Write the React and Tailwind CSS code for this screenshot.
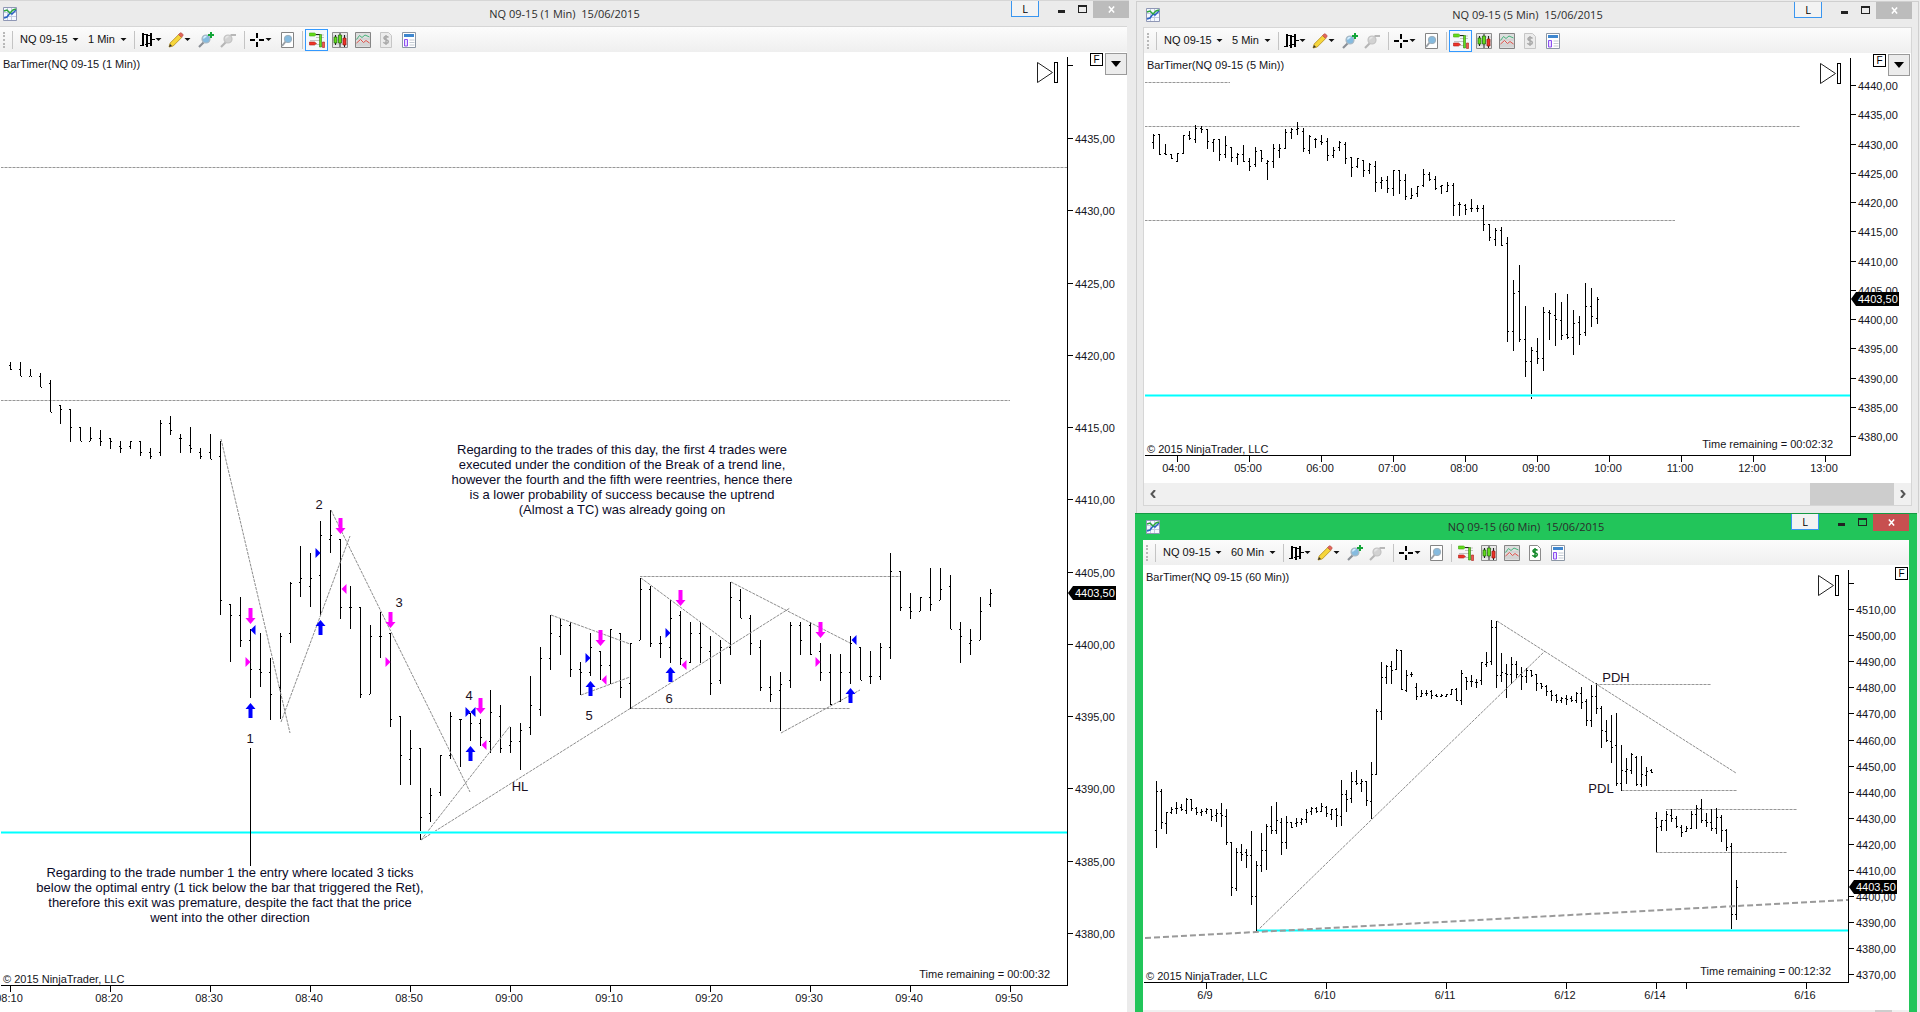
import { useState } from 'react';

// every row is [high, low, open, close] as y positions on the canvas
const bars1 = [
  [362, 370, 365, 369], [362, 376, 369, 376], [369, 376, 376, 376], [373, 387, 376, 387], [380, 412, 383, 412],
  [405, 424, 405, 409], [409, 442, 409, 427], [427, 441, 427, 441], [427, 441, 441, 438], [430, 446, 438, 441],
  [438, 449, 438, 441], [441, 453, 446, 448], [441, 449, 446, 441], [441, 456, 441, 452], [448, 459, 452, 456],
  [420, 456, 452, 423], [416, 435, 423, 430], [434, 453, 438, 438], [427, 453, 445, 448], [448, 459, 452, 456],
  [434, 459, 452, 459], [441, 615, 456, 600], [604, 662, 604, 615], [597, 647, 615, 640], [629, 698, 640, 669],
  [633, 687, 669, 672], [658, 720, 672, 694], [633, 719, 687, 636], [582, 643, 633, 583], [546, 597, 582, 578],
  [553, 607, 586, 578], [521, 615, 575, 535], [510, 553, 539, 535], [539, 619, 539, 607], [586, 629, 607, 607],
  [607, 698, 607, 694], [625, 694, 694, 636], [612, 658, 636, 636], [633, 727, 633, 719], [716, 785, 716, 755],
  [730, 785, 759, 748], [748, 840, 748, 817], [788, 822, 813, 795], [755, 796, 792, 755], [712, 759, 755, 716],
  [719, 767, 719, 719], [713, 741, 713, 723], [719, 746, 723, 737], [690, 753, 741, 712], [705, 753, 716, 748],
  [727, 753, 745, 741], [723, 770, 741, 730], [676, 735, 727, 705], [647, 716, 709, 658], [615, 670, 658, 633],
  [618, 655, 636, 625], [622, 677, 625, 669], [662, 695, 669, 672], [633, 676, 672, 647], [651, 680, 651, 665],
  [629, 684, 665, 629], [633, 698, 633, 687], [643, 709, 683, 643], [578, 640, 640, 589], [586, 647, 589, 643],
  [636, 658, 643, 643], [600, 663, 647, 618], [611, 665, 615, 658], [622, 663, 662, 633], [622, 663, 633, 647],
  [636, 695, 651, 683], [640, 684, 680, 647], [582, 655, 647, 597], [589, 618, 600, 618], [615, 655, 618, 643],
  [640, 691, 647, 687], [676, 702, 687, 694], [672, 731, 690, 684], [622, 688, 680, 625], [622, 655, 625, 640],
  [622, 655, 625, 654], [643, 681, 651, 672], [654, 705, 672, 704], [654, 702, 701, 672], [636, 684, 672, 643],
  [647, 680, 647, 680], [651, 684, 676, 676], [643, 680, 676, 647], [553, 659, 647, 571], [571, 611, 571, 607],
  [593, 619, 607, 611], [597, 611, 611, 597], [568, 611, 597, 604], [568, 600, 600, 589], [575, 629, 586, 629],
  [622, 663, 629, 636], [629, 655, 643, 640], [597, 640, 640, 611], [589, 607, 604, 593],
];

const bars5 = [
  [134, 149, 142, 135], [134, 155, 134, 154], [144, 155, 153, 154], [154, 159, 154, 158], [153, 162, 161, 153],
  [135, 154, 153, 135], [131, 140, 135, 138], [125, 143, 139, 128], [126, 133, 128, 129], [129, 149, 129, 141],
  [139, 152, 142, 139], [139, 161, 139, 154], [136, 158, 154, 145], [147, 162, 147, 157], [153, 165, 157, 154],
  [145, 162, 154, 161], [158, 171, 161, 166], [147, 167, 164, 151], [150, 162, 150, 158], [160, 180, 163, 161],
  [144, 168, 161, 148], [144, 158, 150, 148], [129, 149, 148, 132], [128, 139, 132, 129], [122, 135, 129, 128],
  [128, 152, 131, 148], [135, 154, 150, 136], [138, 148, 139, 139], [135, 145, 141, 142], [138, 161, 141, 155],
  [147, 158, 155, 150], [141, 151, 147, 142], [142, 164, 144, 158], [157, 177, 157, 167], [158, 168, 166, 158],
  [160, 177, 160, 170], [163, 174, 170, 164], [161, 192, 166, 182], [177, 189, 182, 180], [176, 193, 180, 188],
  [170, 196, 188, 170], [170, 194, 170, 180], [174, 200, 180, 196], [188, 199, 198, 195], [186, 197, 193, 186],
  [169, 187, 185, 174], [172, 181, 174, 179], [176, 190, 179, 188], [185, 194, 186, 185], [182, 192, 191, 185],
  [183, 216, 185, 205], [202, 216, 204, 204], [204, 215, 205, 209], [199, 212, 208, 208], [205, 212, 208, 208],
  [205, 231, 208, 224], [224, 241, 224, 237], [228, 246, 239, 230], [227, 246, 230, 245], [237, 342, 243, 331],
  [280, 351, 331, 293], [265, 342, 291, 339], [306, 377, 339, 361], [347, 399, 361, 350], [338, 364, 351, 358],
  [307, 371, 358, 312], [310, 340, 312, 313], [293, 346, 315, 319], [302, 340, 320, 335], [294, 339, 334, 337],
  [310, 355, 337, 323], [316, 345, 322, 334], [283, 336, 332, 306], [288, 327, 306, 316], [297, 324, 318, 299],
];

const bars60 = [
  [781, 848, 830, 791], [789, 829, 791, 822], [812, 834, 823, 812], [807, 814, 812, 809], [802, 814, 808, 808],
  [804, 811, 807, 809], [798, 814, 810, 799], [799, 811, 799, 808], [807, 815, 808, 812], [809, 816, 812, 811],
  [808, 814, 811, 809], [809, 821, 809, 816], [809, 822, 815, 813], [803, 827, 813, 815], [809, 845, 816, 842],
  [842, 896, 842, 887], [848, 891, 888, 852], [844, 861, 852, 854], [849, 868, 852, 855], [831, 905, 855, 896],
  [861, 932, 896, 865], [833, 872, 865, 850], [824, 870, 850, 826], [806, 834, 826, 830], [802, 834, 830, 820],
  [818, 855, 822, 842], [816, 849, 842, 822], [822, 828, 822, 827], [818, 827, 823, 822], [818, 825, 822, 819],
  [809, 823, 819, 812], [807, 815, 811, 808], [807, 813, 808, 811], [803, 812, 811, 806], [806, 817, 807, 813],
  [809, 820, 814, 809], [808, 827, 809, 815], [780, 826, 816, 794], [790, 812, 794, 799], [772, 803, 798, 781],
  [770, 785, 781, 783], [779, 792, 783, 781], [781, 806, 781, 800], [762, 819, 801, 774], [709, 775, 774, 711],
  [662, 720, 711, 677], [665, 684, 677, 666], [661, 684, 666, 670], [649, 670, 669, 650], [650, 690, 650, 689],
  [670, 692, 690, 675], [672, 677, 674, 674], [683, 700, 687, 696], [690, 697, 696, 693], [690, 696, 693, 693],
  [690, 699, 691, 695], [694, 697, 695, 696], [694, 697, 696, 695], [694, 697, 696, 694], [689, 695, 694, 689],
  [688, 701, 689, 700], [670, 705, 700, 673], [677, 690, 677, 681], [675, 687, 681, 681], [679, 688, 682, 682],
  [662, 685, 680, 662], [652, 667, 664, 662], [620, 665, 661, 627], [621, 688, 627, 675], [653, 682, 675, 672],
  [664, 698, 673, 674], [657, 684, 674, 664], [661, 678, 664, 674], [667, 690, 674, 676], [668, 683, 676, 670],
  [670, 677, 670, 675], [674, 691, 674, 683], [683, 689, 683, 686], [685, 696, 686, 691], [690, 701, 691, 695],
  [694, 703, 695, 700], [697, 703, 700, 698], [695, 705, 698, 699], [696, 702, 698, 700], [692, 703, 700, 693],
  [687, 709, 693, 702], [699, 726, 701, 720], [685, 727, 720, 696], [683, 714, 696, 708], [706, 748, 708, 730],
  [720, 742, 731, 740], [715, 763, 741, 747], [713, 786, 745, 783], [745, 791, 783, 770], [758, 784, 771, 769],
  [753, 774, 770, 754], [756, 786, 757, 784], [756, 787, 784, 774], [767, 786, 775, 771], [769, 773, 770, 772],
  [812, 852, 818, 827], [820, 831, 826, 820], [811, 831, 820, 814], [809, 822, 815, 818], [816, 828, 818, 826],
  [825, 837, 827, 832], [826, 832, 831, 828], [811, 829, 828, 814], [805, 829, 814, 808], [799, 823, 808, 820],
  [813, 827, 820, 822], [809, 831, 822, 828], [808, 834, 828, 817], [815, 842, 817, 830], [829, 851, 830, 847],
  [843, 932, 846, 914], [880, 920, 914, 887],
];

const charts = {
  one: {
    interval: '1 Min',
    view: '0 52 1127 960',
    bars: bars1,
    start: 10,
    step: 10,
    axis: { left: 1, x: 1067, top: 57, bottom: 985, stub: 65 },
    prices: { from: 4435, by: -5, count: 12, y: 138, gap: 72.25 },
    times: [
      [10, '08:10'], [110, '08:20'], [210, '08:30'], [310, '08:40'], [410, '08:50'], [510, '09:00'],
      [610, '09:10'], [710, '09:20'], [810, '09:30'], [910, '09:40'], [1010, '09:50'],
    ],
    levels: [[1, 1067, 167], [1, 1010, 400], [640, 900, 576], [631, 850, 708]],
    trends: [
      [221, 439, 290, 733], [281, 722, 350, 536], [331, 510, 470, 792], [421, 840, 510, 726],
      [421, 840, 790, 608], [551, 615, 630, 644], [581, 695, 630, 677], [641, 578, 730, 644],
      [731, 582, 850, 643], [781, 733, 860, 690],
    ],
    support: [1, 1067, 831],
    last: 593,
    skip: [1037, 62],
    timer: { x: 1050, y: 978, text: 'Time remaining = 00:00:32' },
    copy: { x: 3, y: 983 },
    labels: [
      [250, 743, '1'], [319, 509, '2'], [399, 607, '3'], [469, 700, '4'], [589, 720, '5'], [669, 703, '6'], [520, 791, 'HL'],
    ],
  },
  five: {
    interval: '5 Min',
    view: '1144 53 767 430',
    bars: bars5,
    start: 1153,
    step: 6,
    axis: { left: 1145, x: 1850, top: 58, bottom: 455 },
    prices: { from: 4440, by: -5, count: 13, y: 85, gap: 29.25 },
    times: [
      [1177, '04:00'], [1249, '05:00'], [1321, '06:00'], [1393, '07:00'], [1465, '08:00'],
      [1537, '09:00'], [1609, '10:00'], [1681, '11:00'], [1753, '12:00'], [1825, '13:00'],
    ],
    levels: [[1145, 1230, 82], [1145, 1800, 126], [1145, 1675, 220]],
    trends: [],
    support: [1145, 1850, 394],
    last: 299,
    skip: [1820, 63],
    timer: { x: 1833, y: 448, text: 'Time remaining = 00:02:32' },
    copy: { x: 1147, y: 453 },
    labels: [],
  },
  sixty: {
    interval: '60 Min',
    view: '1143 565 766 445',
    bars: bars60,
    start: 1156,
    step: 5,
    axis: { left: 1144, x: 1848, top: 570, bottom: 982, stub: 583 },
    prices: { from: 4510, by: -10, count: 15, y: 609, gap: 26.1 },
    times: [
      [1206, '6/9'], [1326, '6/10'], [1446, '6/11'], [1566, '6/12'], [1656, '6/14'], [1686, ''], [1806, '6/16'],
    ],
    levels: [[1596, 1711, 684], [1622, 1737, 790], [1666, 1797, 809], [1656, 1787, 852]],
    trends: [[1257, 931, 1545, 651], [1497, 621, 1736, 773]],
    support: [1257, 1848, 929],
    last: 887,
    skip: [1818, 575],
    timer: { x: 1831, y: 975, text: 'Time remaining = 00:12:32' },
    copy: { x: 1146, y: 980 },
    labels: [[1616, 682, 'PDH'], [1601, 793, 'PDL']],
  },
};

const sells = [[250, 608], [340, 518], [390, 612], [480, 698], [600, 630], [680, 590], [820, 622]];
const buys = [[250, 703], [320, 620], [470, 746], [590, 681], [670, 667], [850, 688]];
// tip x, tip y, direction (1 = points right), colour
const fills = [
  [250, 630, -1, '#0000ff'], [320, 553, 1, '#0000ff'], [250, 662, 1, '#ff00ff'], [341, 589, -1, '#ff00ff'],
  [390, 662, 1, '#ff00ff'], [470, 712, 1, '#0000ff'], [470, 712, -1, '#0000ff'], [481, 745, -1, '#ff00ff'],
  [590, 658, 1, '#0000ff'], [601, 680, -1, '#ff00ff'], [670, 633, 1, '#0000ff'], [681, 665, -1, '#ff00ff'],
  [820, 662, 1, '#ff00ff'], [851, 640, -1, '#0000ff'],
];

const noteTop = [
  'Regarding to the trades of this day, the first 4 trades were',
  'executed under the condition of the Break of a trend line,',
  'however the fourth and the fifth were reentries, hence there',
  'is a lower probability of success because the uptrend',
  '(Almost a TC) was already going on',
];
const noteBottom = [
  'Regarding to the trade number 1 the entry where located 3 ticks',
  'below the optimal entry (1 tick below the bar that triggered the Ret),',
  'therefore this exit was premature, despite the fact that the price',
  'went into the other direction',
];

function Note({ lines, x, y }) {
  return (
    <text textAnchor="middle" fontSize="13" fill="#0a0a28">
      {lines.map((line, i) => (
        <tspan key={line} x={x} y={y + i * 15}>{line}</tspan>
      ))}
    </text>
  );
}

function Bars({ rows, start, step }) {
  const d = rows
    .map(([h, l, o, c], i) => {
      const x = start + i * step;
      return `M${x} ${h}h1V${l}h-1zM${x - 1} ${o}h1v1h-1zM${x + 1} ${c}h1v1h-1z`;
    })
    .join('');
  return <path d={d} fill="#000" shapeRendering="crispEdges" />;
}

function Chart({ data, children }) {
  const { axis, prices, support, last, skip, timer, copy } = data;
  const priceRows = Array.from({ length: prices.count }, (_, i) => ({
    label: `${prices.from + prices.by * i},00`,
    y: Math.round(prices.y + prices.gap * i),
  }));
  const [sx, sy] = skip;

  return (
    <svg viewBox={data.view} className="block w-full h-auto bg-white font-['Liberation_Sans',Arial,sans-serif]">
      {data.levels.map(([x1, x2, y]) => (
        <g key={`${x1}-${y}`} shapeRendering="crispEdges">
          <path d={`M${x1} ${y + 0.5}H${x2}`} stroke="#c8c8c8" />
          <path d={`M${x1} ${y + 0.5}H${x2}`} stroke="#979797" strokeDasharray="2 2" />
        </g>
      ))}
      <Bars rows={data.bars} start={data.start} step={data.step} />
      {data.trends.map((t) => (
        <path key={t.join()} d={`M${t[0]} ${t[1]}L${t[2]} ${t[3]}`} stroke="#8c8c8c" strokeDasharray="3 1" />
      ))}
      <rect x={support[0]} y={support[2]} width={support[1] - support[0]} height="3" fill="#7fffff" />
      <rect x={support[0]} y={support[2] + 1} width={support[1] - support[0]} height="1" fill="#00ffff" />
      {data === charts.sixty && (
        <path d="M1145 938L1848 900" stroke="#9a9a9a" strokeWidth="2" strokeDasharray="6 3" />
      )}
      {children}
      {data.labels.map(([x, y, text]) => (
        <text key={text} x={x} y={y} fontSize="13" textAnchor="middle" fill="#1a1022">{text}</text>
      ))}

      <g shapeRendering="crispEdges" fill="#000">
        <rect x={axis.x} y={axis.top} width="1" height={axis.bottom - axis.top + 1} />
        <rect x={axis.left} y={axis.bottom} width={axis.x - axis.left} height="1" />
        {axis.stub && <rect x={axis.x} y={axis.stub} width="6" height="1" />}
        {priceRows.map((p) => (
          <rect key={p.label} x={axis.x} y={p.y} width="6" height="1" />
        ))}
        {data.times.map(([x]) => (
          <rect key={x} x={x} y={axis.bottom} width="1" height="7" />
        ))}
      </g>
      <g fontSize="11" fill="#141420">
        {priceRows.map((p) => (
          <text key={p.label} x={axis.x + 8} y={p.y + 5}>{p.label}</text>
        ))}
        {data.times.map(([x, text]) => (
          <text key={x} x={x - 1} y={axis.bottom + 17} textAnchor="middle">{text}</text>
        ))}
        <text x={copy.x} y={copy.y}>© 2015 NinjaTrader, LLC</text>
        <text x={timer.x} y={timer.y} textAnchor="end">{timer.text}</text>
        <text x={axis.left + 2} y={axis.top + 11}>BarTimer(NQ 09-15 ({data.interval}))</text>
      </g>
      <path d={`M${axis.x + 1} ${last}l5 -7h43v14h-43z`} fill="#000" />
      <text x={axis.x + 8} y={last + 4} fontSize="11" fill="#fff">4403,50</text>

      <path d={`M${sx + 0.5} ${sy + 0.5}v20l15 -10z`} fill="#fff" stroke="#222" />
      <rect x={sx + 17.5} y={sy + 0.5} width="3" height="20" fill="#fff" stroke="#000" />
    </svg>
  );
}

function Caret() {
  return (
    <svg viewBox="0 0 7 7" className="w-[7px] h-[7px] shrink-0 pointer-events-none">
      <path d="M0.500 2h6L3.500 5z" fill="#111" />
    </svg>
  );
}

function Separator() {
  return <span className="w-px h-[18px] bg-[#c4c4c4] shrink-0" />;
}

function ToolButton({ label, active, caret, className = 'w-4', onClick, children }) {
  return (
    <button
      type="button"
      aria-label={label}
      onClick={onClick}
      className={`flex items-center justify-center h-[22px] shrink-0 ${className} ${active ? 'border border-[#3399ff] bg-[#f4f8fc]' : ''}`}
    >
      <svg viewBox="0 0 16 16" className="w-4 h-4 shrink-0">{children}</svg>
      {caret && <Caret />}
    </button>
  );
}

function Lens({ muted }) {
  return (
    <>
      <path d="M1 15l5 -5" stroke={muted ? '#b5b5b5' : '#8a8f96'} strokeWidth="2.200" />
      <circle cx="8" cy="7" r="4" fill={muted ? '#d2d2d2' : '#86bbdf'} stroke={muted ? '#c2c2c2' : '#a9b7c1'} strokeWidth="1.200" />
      <path d="M5.500 6.500a2.800 2.800 0 0 1 3 -2" stroke={muted ? '#e6e6e6' : '#d8efff'} strokeWidth="1.300" fill="none" />
    </>
  );
}

function Toolbar({ interval, active, account, id }) {
  const [trader, setTrader] = useState(active);
  return (
    <div className="flex items-center h-[25px] pl-[3px] bg-linear-to-b from-[#fcfcfc] to-[#efefef] overflow-hidden text-[11px] text-[#111] font-['Liberation_Sans',Arial,sans-serif]">
      <span className="w-[2px] h-4 border-l-2 border-dotted border-[#b8b8b8] mr-[7px] shrink-0" />
      <Separator />
      <label htmlFor={`${id}-instrument`} className="flex items-center ml-[7px]">
        <select id={`${id}-instrument`} aria-label="Instrument" className="appearance-none w-[52px] outline-none">
          <option>NQ 09-15</option>
        </select>
        <Caret />
      </label>
      <label htmlFor={`${id}-interval`} className="flex items-center ml-[9px] mr-[7px]">
        <select
          id={`${id}-interval`}
          aria-label="Interval"
          className={`appearance-none outline-none ${interval === '60 Min' ? 'w-[38px]' : 'w-8'}`}
        >
          <option>{interval}</option>
        </select>
        <Caret />
      </label>
      <Separator />
      <ToolButton label="Chart style" caret className="w-[23px] ml-1">
        <path d="M4 1v13M8 2v13M12 1v13" stroke="#000" strokeWidth="2" shapeRendering="crispEdges" />
        <path
          d="M1 13.500h3M4 2.500h4M6 12.500h2M9 3.500h3M9 11.500h3M13 7.500h3"
          stroke="#000"
          shapeRendering="crispEdges"
        />
      </ToolButton>
      <ToolButton label="Drawing tools" caret className="w-[23px] ml-[6px]">
        <path d="M1 15l1.200 -4l8.500 -8.500l3 3l-8.500 8.500z" fill="#f6d63b" stroke="#b38a1c" strokeWidth=".8" />
        <path d="M10.500 2.500l1.500 -1.500q1 -.6 1.800 .2l1 1q.8 .9 0 1.700l-1.300 1.400z" fill="#e2675c" stroke="#b2483c" strokeWidth=".6" />
        <path d="M1 15l1 -3l2 2z" fill="#333" />
      </ToolButton>
      <ToolButton label="Zoom in" className="w-4 ml-[7px]">
        <Lens />
        <path d="M13 0v6M10 3h6" stroke="#13a538" strokeWidth="2" />
      </ToolButton>
      <ToolButton label="Zoom out" className="w-4 ml-[6px] mr-2">
        <Lens muted />
        <path d="M10.500 3h5.500" stroke="#b8b8b8" strokeWidth="2" />
      </ToolButton>
      <Separator />
      <ToolButton label="Cross hair" caret className="w-[23px] ml-1">
        <path d="M8 1v5M8 10v5M1 8h5M10 8h5" stroke="#000" strokeWidth="2" shapeRendering="crispEdges" />
      </ToolButton>
      <ToolButton label="Data box" className="w-4 mx-[7px]">
        <path d="M2.500 .5h12v15h-12z" fill="#fff" stroke="#848484" />
        <path d="M3 14l4 -5" stroke="#9aa0a6" strokeWidth="2" />
        <circle cx="9" cy="7" r="3.700" fill="#86bbdf" stroke="#9fb0bc" />
      </ToolButton>
      <Separator />
      <ToolButton label="Chart trader" active={trader} onClick={() => setTrader(!trader)} className="w-[23px] ml-[2px]">
        <path d="M7 3h8M7 5.500h8M1 8.500h10M7 12.500h5" stroke="#c3c3c3" />
        <path d="M.5 1h5l2 1.500l-2 1.500h-5z" fill="#62dc1c" stroke="#3fa30f" strokeWidth=".6" />
        <path d="M.5 10h5l2 1.500l-2 1.500h-5z" fill="#ef3328" stroke="#a91f18" strokeWidth=".6" />
        <path d="M7 2.500h4" stroke="#222" />
        <path d="M10.500 2.500h2v12.500h-2z" fill="#62dc1c" stroke="#2f7f0d" strokeWidth=".6" />
        <path d="M13.500 10h2v5.500h-2z" fill="#ef5a50" stroke="#a91f18" strokeWidth=".6" />
      </ToolButton>
      <ToolButton label="Candlesticks" className="w-[23px]">
        <path d="M.5 .5h15v15h-15z" fill="#e9e9e9" stroke="#8d8d8d" />
        <path d="M1 4h14M1 8h14M1 12h14" stroke="#c6c6c6" />
        <path d="M3.500 3v10M8 1v14M12.500 3v12" stroke="#222" />
        <path d="M2 5h3v6h-3zM6.500 3h3v8h-3z" fill="#62dc1c" stroke="#1f5f0d" strokeWidth=".7" />
        <path d="M11 6h3v7h-3z" fill="#ef3328" stroke="#8d1710" strokeWidth=".7" />
      </ToolButton>
      <ToolButton label="Indicators" className="w-[23px]">
        <path d="M.5 .5h15v15h-15z" fill="#dedede" stroke="#858585" />
        <path d="M1 7h14M1 11h14M1 13h14" stroke="#c9c9c9" />
        <path d="M1.500 7.500l3 -4l2.500 2l3 -2.500l4.500 2" stroke="#45b37a" fill="none" />
        <path d="M1.500 11l4 -3.500l3 3l2.500 -2l3.500 2.500" stroke="#e0524a" fill="none" />
      </ToolButton>
      <ToolButton label="Strategies" className="w-[23px]">
        <path d="M2.500 .5h8l3 3v12h-11z" fill={account ? '#fff' : '#ececec'} stroke={account ? '#8b8b8b' : '#c6c6c6'} />
        <path
          d="M10.500 5.500q-1 -1.200 -2.800 -1q-2 .4 -1.700 1.800q.3 1.200 2.100 1.500q2.300 .5 2.300 1.900q-.2 1.600 -2.300 1.700q-1.900 0 -2.700 -1.300M8 3v10"
          stroke={account ? '#168a2c' : '#aaa'}
          strokeWidth="1.500"
          fill="none"
        />
      </ToolButton>
      <ToolButton label="Properties" className="w-[23px]">
        <path d="M1.500 .5h13v15h-13z" fill="#fff" stroke="#8c97a5" />
        <path d="M3 2h10v3h-10z" fill="#3f87cf" />
        <path d="M3.500 7.500h3v6.500h-3z" fill="#e8dcff" stroke="#8c4ff0" />
        <path d="M8.500 8h5M8.500 10.500h5M8.500 13h5" stroke="#c3cad3" />
      </ToolButton>
    </div>
  );
}

function TitleBar({ interval, focused, className }) {
  return (
    <header className={`grid grid-cols-[1fr_auto_1fr] items-start pl-[3px] ${className}`}>
      <svg viewBox="0 0 14 14" className="w-[14px] h-[14px] mt-[6px]">
        <path d="M.5 .5h13v13h-13z" fill="#f5f8ff" stroke="#8f97b5" />
        <path d="M4.500 1v12M8.500 1v12M1 5.500h12M1 9.500h12" stroke="#c3cbe0" />
        <path d="M1 11l3 -1l3 -4l2 1l4 -4" stroke="#2b62c4" strokeWidth="1.500" fill="none" />
        <path d="M1 4l3 -1l3 3l3 -3l3 -1" stroke="#2aa63a" strokeWidth="1.500" fill="none" />
      </svg>
      <h1 className="mt-[5px] pr-[3px] text-[11px] leading-4 whitespace-pre text-[#2b2b2b] font-['Open_Sans','Segoe_UI',sans-serif]">
        {`NQ 09-15 (${interval})  15/06/2015`}
      </h1>
      <div className="flex items-start justify-end">
        <button
          type="button"
          className="w-7 h-4 mr-3 border border-t-0 border-[#3a96f0] bg-[#f3f3f3] text-[11px] leading-[14px] text-black font-['Open_Sans','Segoe_UI',sans-serif]"
        >
          L
        </button>
        <button type="button" aria-label="Minimize" className="w-[21px] h-4 flex justify-center pt-[9px]">
          <span className="w-[7px] h-[3px] bg-[#222]" />
        </button>
        <button type="button" aria-label="Maximize" className="w-[21px] h-4 flex justify-center pt-[4px]">
          <span className="w-[9px] h-2 border border-t-2 border-[#222]" />
        </button>
        <button
          type="button"
          aria-label="Close"
          className={`w-9 h-[17px] flex items-center justify-center ${focused ? 'bg-[#c75050]' : 'bg-[#bcbcbc]'}`}
        >
          <svg viewBox="0 0 8 8" className="w-[7px] h-[7px]">
            <path d="M1 .5l6 7M7 .5l-6 7" stroke="#fff" strokeWidth="1.700" />
          </svg>
        </button>
      </div>
    </header>
  );
}

function ChartControls({ className, menu }) {
  return (
    <div className={`absolute flex items-start gap-[2px] ${className}`}>
      <button
        type="button"
        className="w-[13px] h-[13px] border border-black bg-white text-[10px] leading-[11px] font-['Liberation_Sans',Arial,sans-serif]"
      >
        F
      </button>
      {menu && (
        <button type="button" aria-label="Chart menu" className="flex items-center justify-center w-[22px] h-[22px] border border-[#9a9a9a] bg-[#ececec]">
          <svg viewBox="0 0 10 6" className="w-[10px] h-[6px]">
            <path d="M0 0h10L5 6z" fill="#000" />
          </svg>
        </button>
      )}
    </div>
  );
}

export default function App() {
  return (
    <div className="grid grid-cols-[1135fr_785fr] h-screen overflow-hidden bg-[#ebebeb]">
      <section className="pr-2">
        <TitleBar interval="1 Min" className="h-[26px] border-t border-[#d6d6d6] -mr-[2px]" />
        <div className="border-t border-[#d6d6d6]">
          <Toolbar id="one" interval="1 Min" active />
          <div className="relative">
            <Chart data={charts.one}>
              <rect x="250" y="748" width="1" height="118" fill="#000" />
              {sells.map(([x, y]) => (
                <path key={x} d={`M${x - 1.5} ${y}h4v10h3l-5 6l-5 -6h3z`} fill="#ff00ff" />
              ))}
              {buys.map(([x, y]) => (
                <path key={x} d={`M${x - 1.5} ${y + 15}h4v-9h3l-5 -6l-5 6h3z`} fill="#0000ff" />
              ))}
              {fills.map(([x, y, dir, color]) => (
                <path key={`${x}${y}${dir}`} d={`M${x + 0.5} ${y}l${-5 * dir} -5v10z`} fill={color} />
              ))}
              <Note lines={noteTop} x={622} y={454} />
              <Note lines={noteBottom} x={230} y={877} />
            </Chart>
            <ChartControls className="top-px right-0" menu />
          </div>
        </div>
      </section>

      <div className="min-w-0">
        <section className="mt-px ml-px mr-px border border-b-0 border-[#cfcfcf] px-[6px] pb-[7px]">
          <TitleBar interval="5 Min" className="h-[25px]" />
          <div className="border border-[#d6d6d6]">
            <Toolbar id="five" interval="5 Min" active />
            <div className="relative">
              <Chart data={charts.five} />
              <ChartControls className="top-px right-px" menu />
            </div>
            <div className="flex items-center h-[22px] bg-[#f0f0f0] text-[#555]">
              <button type="button" aria-label="Scroll left" className="w-[17px] flex justify-center">
                <svg viewBox="0 0 6 8" className="w-[6px] h-2">
                  <path d="M5 0L1.500 4L5 8" stroke="currentColor" strokeWidth="2" fill="none" />
                </svg>
              </button>
              <div className="flex-1 flex justify-end">
                <div className="w-[84px] h-[22px] bg-[#cdcdcd]" />
              </div>
              <button type="button" aria-label="Scroll right" className="w-[17px] flex justify-center">
                <svg viewBox="0 0 6 8" className="w-[6px] h-2">
                  <path d="M1 0L4.500 4L1 8" stroke="currentColor" strokeWidth="2" fill="none" />
                </svg>
              </button>
            </div>
          </div>
        </section>

        <section className="mr-[3px] px-2 border-t border-[#159a43] bg-[#22c55a]">
          <TitleBar interval="60 Min" focused className="h-[26px]" />
          <Toolbar id="sixty" interval="60 Min" account />
          <div className="relative">
            <Chart data={charts.sixty} />
            <ChartControls className="top-[2px] right-px" />
          </div>
          <div className="flex justify-end h-[22px] pr-[17px] bg-[#f0f0f0]">
            <div className="w-[17px] bg-[#cdcdcd]" />
          </div>
        </section>
      </div>
    </div>
  );
}
